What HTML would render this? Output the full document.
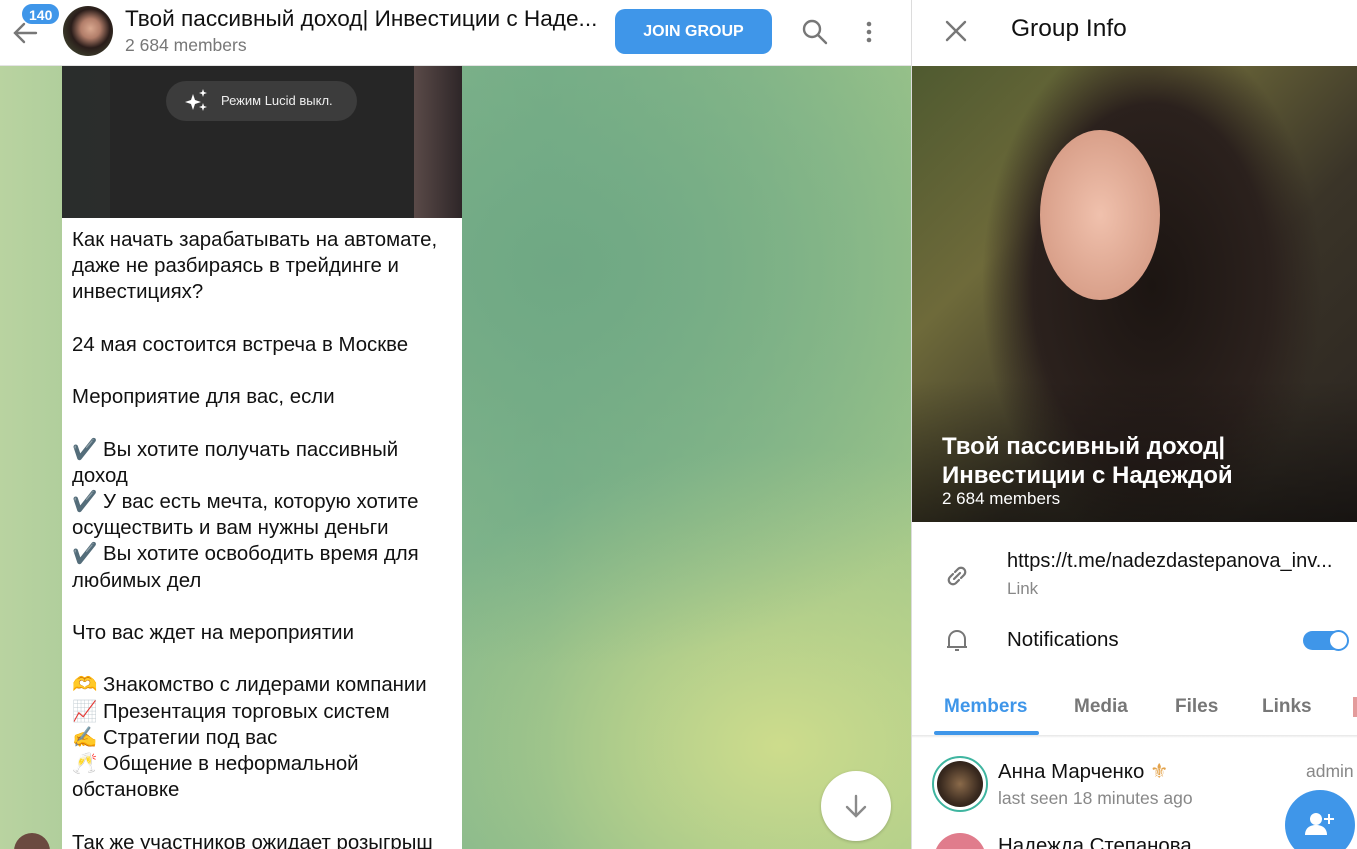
<!DOCTYPE html>
<html style="overflow:hidden;height:849px"><head><meta charset="utf-8"><style>
*{margin:0;padding:0;box-sizing:border-box}
body{width:1357px;height:849px;overflow:hidden;font-family:"Liberation Sans","Noto Sans CJK SC",sans-serif;position:relative;background:#fff}
.chat{position:absolute;left:0;top:66px;width:911px;height:783px;background:radial-gradient(ellipse 500px 400px at 560px 200px,#6fa884 0%,rgba(111,168,132,0) 100%),radial-gradient(ellipse 400px 300px at 780px 680px,#cddc8c 0%,rgba(205,220,140,0) 100%),linear-gradient(90deg,#b9d3a0 0%,#93bf90 30%,#7db38a 60%,#9cc48a 100%)}
.hdr{position:absolute;left:0;top:0;width:911px;height:66px;background:#fff;border-bottom:1px solid #e4e4e4}
.divider{position:absolute;left:911px;top:0;width:1px;height:849px;background:#dcdcdc}
.bubble{position:absolute;left:62px;top:218px;width:400px;height:631px;overflow:hidden;background:#fff;padding:9px 10px;font-size:20.4px;line-height:26.2px;color:#111}
.img{position:absolute;left:62px;top:66px;width:400px;height:152px;background:linear-gradient(90deg,#2a2d2c 0,#2b2d2c 12%,#262626 12%,#262626 88%,#5a4a48 88%,#2e2628 100%)}
.pill{position:absolute;left:166px;top:81px;width:191px;height:40px;border-radius:20px;background:#3c3c3c;color:#eee;font-size:13px;line-height:40px;padding-left:55px}
</style></head><body>
<div class="chat"></div>
<div class="img"></div>
<div class="pill">Режим Lucid выкл.</div>
<svg style="position:absolute;left:184px;top:88px" width="26" height="26" viewBox="0 0 26 26" fill="#fff"><path d="M9 6 L11 12 L17 14 L11 16 L9 22 L7 16 L1 14 L7 12Z"/><path d="M19 1 L20 4 L23 5 L20 6 L19 9 L18 6 L15 5 L18 4Z"/><path d="M19 15 L20 18 L23 19 L20 20 L19 23 L18 20 L15 19 L18 18Z"/></svg>
<div class="bubble">Как начать зарабатывать на автомате, даже не разбираясь в трейдинге и инвестициях?<br><br>24 мая состоится встреча в Москве<br><br>Мероприятие для вас, если<br><br>✔️ Вы хотите получать пассивный доход<br>✔️ У вас есть мечта, которую хотите осуществить и вам нужны деньги<br>✔️ Вы хотите освободить время для любимых дел<br><br>Что вас ждет на мероприятии<br><br>🫶 Знакомство с лидерами компании<br>📈 Презентация торговых систем<br>✍️ Стратегии под вас<br>🥂 Общение в неформальной обстановке<br><br>Так же участников ожидает розыгрыш</div>
<div style="position:absolute;left:14px;top:833px;width:36px;height:36px;border-radius:50%;background:#6b4a40"></div>
<div style="position:absolute;left:821px;top:771px;width:70px;height:70px;border-radius:50%;background:#fff;box-shadow:0 1px 3px rgba(0,0,0,.2)"></div>
<svg style="position:absolute;left:841px;top:791px" width="30" height="30" viewBox="0 0 30 30" fill="none" stroke="#8a8a8a" stroke-width="2.4" stroke-linecap="round"><path d="M15 5V25M6 16L15 25L24 16"/></svg>
<div class="hdr"></div>
<svg style="position:absolute;left:10px;top:18px" width="30" height="30" viewBox="0 0 30 30" fill="none" stroke="#777" stroke-width="2.4" stroke-linecap="round"><path d="M26 15H5M14 6L5 15L14 24"/></svg>
<div style="position:absolute;left:21px;top:3px;height:22px;padding:0 7px;border-radius:11px;background:#3f96e9;color:#fff;font-weight:bold;font-size:14px;line-height:22px;border:1px solid #fff">140</div>
<div style="position:absolute;left:63px;top:6px;width:50px;height:50px;border-radius:50%;background:radial-gradient(circle at 55% 45%,#d9a88f 0,#b27e6a 25%,#2a1d1a 50%,#4c5a3c 100%)"></div>
<div style="position:absolute;left:125px;top:6px;font-size:22.6px;color:#111;white-space:nowrap">Твой пассивный доход| Инвестиции с Наде...</div>
<div style="position:absolute;left:125px;top:35px;font-size:17.5px;color:#777">2 684 members</div>
<div style="position:absolute;left:615px;top:9px;width:157px;height:45px;border-radius:10px;background:#3f96e9;color:#fff;font-weight:bold;font-size:16px;line-height:45px;text-align:center">JOIN GROUP</div>
<svg style="position:absolute;left:801px;top:18px" width="28" height="28" viewBox="0 0 28 28" fill="none" stroke="#777" stroke-width="2.4" stroke-linecap="round"><circle cx="11" cy="11" r="8"/><path d="M17 17L25 25"/></svg>
<svg style="position:absolute;left:858px;top:18px" width="22" height="28" viewBox="0 0 22 28" fill="#777"><circle cx="11" cy="6" r="2.3"/><circle cx="11" cy="14" r="2.3"/><circle cx="11" cy="22" r="2.3"/></svg>
<div class="divider"></div>
<svg style="position:absolute;left:943px;top:18px" width="26" height="26" viewBox="0 0 26 26" stroke="#777" stroke-width="2.4" stroke-linecap="round"><path d="M4 4L22 22M22 4L4 22"/></svg>
<div style="position:absolute;left:1011px;top:15px;font-size:24.5px;color:#111">Group Info</div>
<div style="position:absolute;left:912px;top:66px;width:445px;height:456px;background:radial-gradient(ellipse 170px 260px at 240px 220px,#1c1512 0,#2b211d 70%,rgba(40,30,25,0) 100%),linear-gradient(135deg,#4f5a30 0%,#6e6a3a 30%,#3a3428 60%,#2a2420 100%)"></div>
<div style="position:absolute;left:1040px;top:130px;width:120px;height:170px;border-radius:50%;background:radial-gradient(ellipse at 50% 50%,#f0c1ad 0,#d9a08a 70%,#b47a66 100%)"></div>
<div style="position:absolute;left:912px;top:380px;width:445px;height:142px;background:linear-gradient(rgba(0,0,0,0),rgba(0,0,0,.45))"></div>
<div style="position:absolute;left:942px;top:432px;font-size:24px;line-height:29px;font-weight:bold;color:#fff">Твой пассивный доход|<br>Инвестиции с Надеждой</div>
<div style="position:absolute;left:942px;top:489px;font-size:17px;color:#fff">2 684 members</div>
<svg style="position:absolute;left:942px;top:561px" width="30" height="30" viewBox="0 0 30 30" fill="none" stroke="#777" stroke-width="2.2" stroke-linecap="round"><path d="M13 11L16 8a4 4 0 0 1 6 6l-3 3M17 19l-3 3a4 4 0 0 1-6-6l3-3M12 18l6-6"/></svg>
<div style="position:absolute;left:1007px;top:550px;font-size:20px;color:#111;white-space:nowrap">https://t.me/nadezdastepanova_inv...</div>
<div style="position:absolute;left:1007px;top:579px;font-size:17px;color:#888">Link</div>
<svg style="position:absolute;left:942px;top:625px" width="30" height="30" viewBox="0 0 30 30" fill="none" stroke="#777" stroke-width="2" stroke-linejoin="round"><path d="M7 22V14a8 8 0 0 1 16 0v8H7zM5 22h20M13 25h4"/></svg>
<div style="position:absolute;left:1007px;top:628px;font-size:20.5px;color:#111">Notifications</div>
<div style="position:absolute;left:1303px;top:631px;width:45px;height:19px;border-radius:10px;background:#3f96e9"></div>
<div style="position:absolute;left:1328px;top:630px;width:21px;height:21px;border-radius:50%;background:#fff;border:2px solid #3f96e9"></div>
<div style="position:absolute;left:944px;top:696px;font-size:19px;font-weight:bold;color:#3f96e9">Members</div>
<div style="position:absolute;left:1074px;top:696px;font-size:19px;font-weight:bold;color:#777">Media</div>
<div style="position:absolute;left:1175px;top:696px;font-size:19px;font-weight:bold;color:#777">Files</div>
<div style="position:absolute;left:1262px;top:696px;font-size:19px;font-weight:bold;color:#777">Links</div>
<div style="position:absolute;left:1353px;top:697px;width:4px;height:20px;background:#e39c9c"></div>
<div style="position:absolute;left:934px;top:731px;width:105px;height:4px;border-radius:2px;background:#3f96e9"></div>
<div style="position:absolute;left:912px;top:735px;width:445px;height:3px;background:linear-gradient(#e6e6e6,#fff)"></div>
<div style="position:absolute;left:932px;top:756px;width:56px;height:56px;border-radius:50%;border:2px solid #3fb5a0;padding:3px"><div style="width:100%;height:100%;border-radius:50%;background:radial-gradient(circle,#8a6a4a 0,#3a2a1f 60%,#1b1410 100%)"></div></div>
<div style="position:absolute;left:998px;top:759px;font-size:20.4px;color:#111;white-space:nowrap">Анна Марченко <span style="color:#e3a24a">⚜</span></div>
<div style="position:absolute;left:998px;top:788px;font-size:17.5px;color:#888">last seen 18 minutes ago</div>
<div style="position:absolute;left:1306px;top:761px;font-size:17.5px;color:#888">admin</div>
<div style="position:absolute;left:934px;top:833px;width:52px;height:52px;border-radius:50%;background:#e07c8c"></div>
<div style="position:absolute;left:998px;top:835px;font-size:20.4px;color:#111;white-space:nowrap">Надежда Степанова</div>
<div style="position:absolute;left:1285px;top:790px;width:70px;height:70px;border-radius:50%;background:#3f96e9"></div>
<svg style="position:absolute;left:1303px;top:808px" width="32" height="32" viewBox="0 0 32 32" fill="#fff"><circle cx="13" cy="11" r="6"/><path d="M2 27c0-7 5-10 11-10s11 3 11 10z"/><path d="M25 6h2v4h4v2h-4v4h-2v-4h-4v-2h4z"/></svg>
</body></html>
